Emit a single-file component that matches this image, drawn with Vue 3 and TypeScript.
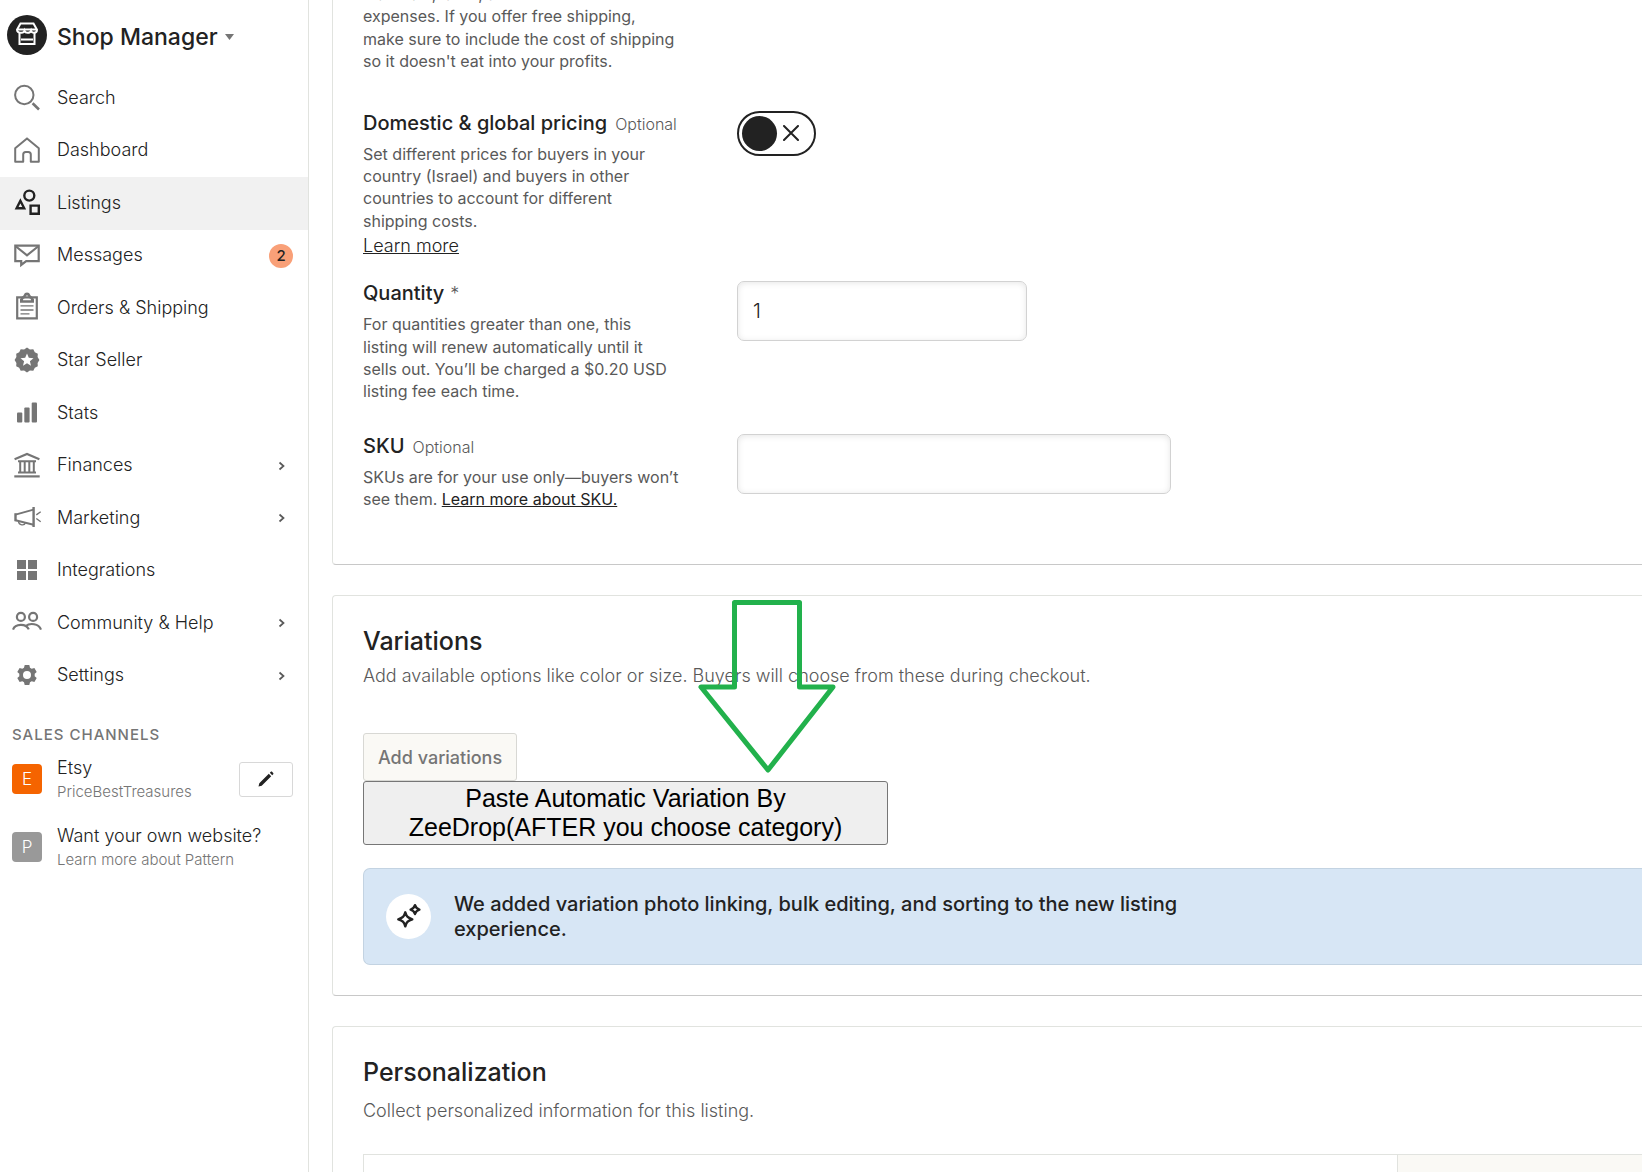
<script setup lang="ts">
import { ref } from 'vue'

interface NavItem {
  label: string
  icon: string
  active?: boolean
  badge?: number
  expandable?: boolean
}

const stroke = 'fill="none" stroke="currentColor"'

const navItems: NavItem[] = [
  {
    label: 'Search',
    icon: `<g ${stroke} stroke-width="2"><circle cx="12.3" cy="13" r="9.2"/><path stroke-width="2.6" d="M20.6 21.3 27 27.5"/></g>`,
  },
  {
    label: 'Dashboard',
    icon: `<path ${stroke} stroke-width="2" stroke-linejoin="round" d="M3.2 13.2 15 3.4l11.8 9.8v13.6h-8v-7.4a2.5 2.5 0 0 0-2.5-2.5h-2.6a2.5 2.5 0 0 0-2.5 2.5v7.4H3.2Z"/>`,
  },
  {
    label: 'Listings',
    active: true,
    icon: `<g ${stroke} stroke-width="2.4"><circle cx="17.3" cy="8.6" r="5"/><path d="M8.4 13.8 4.6 21.3h7.6Z"/><path d="M18.6 18.6h8.2v8.2h-8.2Z"/></g>`,
  },
  {
    label: 'Messages',
    badge: 2,
    icon: `<g ${stroke} stroke-width="2.2"><path d="M3.3 5.6h23.4v15.6H14.2L9.2 25v-3.8H3.3Z"/><path d="m4 6.5 11 8.8 11-8.8"/></g>`,
  },
  {
    label: 'Orders & Shipping',
    icon: `<path ${stroke} stroke-width="2.2" d="M5.2 5.4h19.6v21H5.2Z"/><path fill="currentColor" fill-rule="evenodd" d="M8 10.8V7.2L10 4.6c.8-.4 1.4-.9 1.7-1.7a3.5 3.5 0 0 1 6.6 0c.3.8.9 1.3 1.7 1.7l2 2.6v3.6Zm3-2.6h8c0-1-.6-1.6-1.6-1.9-.9-.3-1-.8-1.1-1.5a1.3 1.3 0 0 0-2.6 0c-.1.7-.2 1.2-1.1 1.5-1 .3-1.6.9-1.6 1.9Z"/><path ${stroke} stroke-width="1.3" d="M8.5 13.9h13M8.5 18h13M8.5 21.9h9"/>`,
  },
  {
    label: 'Star Seller',
    icon: `<path fill="currentColor" fill-rule="evenodd" d="m15 2.6 2.9 1.8 3.4-.2 1.5 3 3 1.5-.2 3.4L27.4 15l-1.8 2.9.2 3.4-3 1.5-1.5 3-3.4-.2L15 27.4l-2.9-1.8-3.4.2-1.5-3-3-1.5.2-3.4L2.6 15l1.8-2.9-.2-3.4 3-1.5 1.5-3 3.4.2Zm0 5.9-1.8 4.3-4.7.4 3.6 3-1.1 4.6 4-2.5 4 2.5-1.1-4.6 3.6-3-4.7-.4Z"/>`,
  },
  {
    label: 'Stats',
    icon: `<g fill="currentColor"><rect x="5" y="15.5" width="5.3" height="10" rx="1"/><rect x="12.3" y="10.5" width="5.3" height="15" rx="1"/><rect x="19.7" y="5.5" width="5.3" height="20" rx="1"/></g>`,
  },
  {
    label: 'Finances',
    expandable: true,
    icon: `<g ${stroke} stroke-width="2"><path stroke-width="2.2" d="M2.6 9.2 15 4l12.4 5.2"/><path d="M6 11.2h18M6 22.6h18M8.2 11v12M12.7 11v12M17.3 11v12M21.8 11v12"/><path stroke-width="2.2" d="M2.3 26.4h25.4"/></g>`,
  },
  {
    label: 'Marketing',
    expandable: true,
    icon: `<g ${stroke} stroke-width="2"><path stroke-width="2.4" d="M3.5 11.3v8M21.6 5v20"/><path d="m3.5 12.6 18-5M3.5 18.3l18 4.5"/><path stroke-width="1.4" d="M6.5 19.5c.4 4 6 4.4 6.8 1.4M24.3 12.9l4.4-3.2M24.3 16.5l4.4 3.2"/></g>`,
  },
  {
    label: 'Integrations',
    icon: `<path fill="currentColor" d="M5 5h9v9H5ZM16 5h9v9h-9ZM5 16h9v9H5ZM16 16h9v9h-9Z"/>`,
  },
  {
    label: 'Community & Help',
    expandable: true,
    icon: `<g ${stroke} stroke-width="2.2"><circle cx="8.9" cy="9.9" r="4"/><circle cx="21.1" cy="9.9" r="4"/><path d="M1 22.6c2.2-6 13-6.4 15.8-.2M13.8 19c4-3.3 13-2.6 15.2 3.6"/></g>`,
  },
  {
    label: 'Settings',
    expandable: true,
    icon: `<path fill="currentColor" fill-rule="evenodd" d="M12.7 5h4.6l.7 2.7 1.7 1 2.7-.8 2.3 4-2 1.9v2.4l2 1.9-2.3 4-2.7-.8-1.7 1-.7 2.7h-4.6l-.7-2.7-1.7-1-2.7.8-2.3-4 2-1.9v-2.4l-2-1.9 2.3-4 2.7.8 1.7-1Zm2.3 6a4 4 0 1 0 0 8 4 4 0 0 0 0-8Z"/>`,
  },
]

const globalPricing = ref(false)
const quantity = ref('1')
const sku = ref('')
</script>

<template>
  <div class="page">
    <aside class="sidebar">
      <button class="brand" type="button">
        <svg class="brand-logo" viewBox="0 0 40 40" aria-hidden="true">
          <circle cx="20" cy="20" r="20" fill="#222" />
          <g fill="none" stroke="#fff" stroke-width="2">
            <path d="M13.5 8.5h13l3.5 6.3c0 2.5-1.8 3-3 3-1.5 0-2.7-.8-3-2-.6 1.6-1.8 2-3.5 2-1.7 0-2.4-.4-3-2-.3 1.2-1.5 2-3 2-2.5 0-4.5-.5-4.5-3Z" />
            <path d="M10.5 14.5h19M12.5 18V29h15V18M14 24.5h12" />
          </g>
        </svg>
        <span class="brand-name">Shop Manager</span>
        <svg class="caret" viewBox="0 0 9 6" aria-hidden="true"><path fill="#757575" d="M0 0h9L4.5 6Z" /></svg>
      </button>

      <nav class="nav">
        <a v-for="item in navItems" :key="item.label" href="#" class="nav-item" :class="{ active: item.active }">
          <svg class="nav-icon" viewBox="0 0 30 30" aria-hidden="true" v-html="item.icon"></svg>
          <span class="nav-label">{{ item.label }}</span>
          <span v-if="item.badge" class="badge">{{ item.badge }}</span>
          <svg v-if="item.expandable" class="chevron" viewBox="0 0 8 10" aria-hidden="true">
            <path d="m1.5 1.5 4 3.5-4 3.5" fill="none" stroke="#595959" stroke-width="1.7" />
          </svg>
        </a>
      </nav>

      <h2 class="channels-title">Sales channels</h2>
      <div class="channel">
        <span class="tile tile-etsy">E</span>
        <a href="#" class="channel-text">
          <span class="channel-name">Etsy</span>
          <span class="channel-sub">PriceBestTreasures</span>
        </a>
        <button class="edit" type="button" aria-label="Edit shop">
          <svg width="18" height="18" viewBox="0 0 18 18" aria-hidden="true">
            <path fill="#222" d="m1.5 16.5.8-3.2L11.8 3.8l2.4 2.4-9.5 9.5ZM12.8 2.8l1-1c.4-.4.9-.4 1.3 0l1.1 1.1c.4.4.4.9 0 1.3l-1 1Z" />
          </svg>
        </button>
      </div>
      <div class="channel">
        <span class="tile tile-pattern">P</span>
        <a href="#" class="channel-text">
          <span class="channel-name">Want your own website?</span>
          <span class="channel-sub">Learn more about Pattern</span>
        </a>
      </div>
    </aside>

    <main class="main">
      <section class="card card-pricing">
        <div class="field field-price">
          <p class="help">
            materials, labor, and other business<br />
            expenses. If you offer free shipping,<br />
            make sure to include the cost of shipping<br />
            so it doesn't eat into your profits.
          </p>
        </div>

        <div class="field field-global">
          <div class="field-info">
            <label class="field-label" for="global">Domestic &amp; global pricing</label>
            <span class="optional">Optional</span>
            <p class="help">
              Set different prices for buyers in your<br />
              country (Israel) and buyers in other<br />
              countries to account for different<br />
              shipping costs.
            </p>
            <a href="#" class="learn">Learn more</a>
          </div>
          <span class="toggle">
            <input id="global" v-model="globalPricing" type="checkbox" />
            <svg viewBox="0 0 16 16" aria-hidden="true">
              <path d="m1 1 14 14M15 1 1 15" fill="none" stroke="#222" stroke-width="2" stroke-linecap="round" />
            </svg>
          </span>
        </div>

        <div class="field field-quantity">
          <div class="field-info">
            <label class="field-label" for="quantity">Quantity</label>
            <span class="required">*</span>
            <p class="help">
              For quantities greater than one, this<br />
              listing will renew automatically until it<br />
              sells out. You’ll be charged a $0.20 USD<br />
              listing fee each time.
            </p>
          </div>
          <input id="quantity" v-model="quantity" class="text-input narrow" type="text" />
        </div>

        <div class="field">
          <div class="field-info">
            <label class="field-label" for="sku">SKU</label>
            <span class="optional">Optional</span>
            <p class="help">
              SKUs are for your use only—buyers won’t<br />
              see them. <a href="#">Learn more about SKU.</a>
            </p>
          </div>
          <input id="sku" v-model="sku" class="text-input" type="text" />
        </div>
      </section>

      <section class="card card-variations">
        <h2 class="card-title">Variations</h2>
        <p class="card-sub">Add available options like color or size. Buyers will choose from these during checkout.</p>
        <button class="add" type="button">Add variations</button>
        <button class="paste" type="button">Paste Automatic Variation By ZeeDrop(AFTER you choose category)</button>
        <div class="banner">
          <span class="banner-icon">
            <svg width="27" height="27" viewBox="0 0 27 27" aria-hidden="true">
              <g fill="none" stroke="#222" stroke-width="2.4" stroke-linejoin="round">
                <path d="M10.3 9.3c1.3 4.3 2.7 5.7 7 7-4.3 1.3-5.7 2.7-7 7-1.3-4.3-2.7-5.7-7-7 4.3-1.3 5.7-2.7 7-7Z" />
                <path d="M20 2.2c.8 2.7 1.7 3.6 4.4 4.4-2.7.8-3.6 1.7-4.4 4.4-.8-2.7-1.7-3.6-4.4-4.4 2.7-.8 3.6-1.7 4.4-4.4Z" />
              </g>
            </svg>
          </span>
          <p class="banner-text">
            We added variation photo linking, bulk editing, and sorting to the new listing experience.
          </p>
        </div>
        <svg class="arrow" width="140" height="180" viewBox="0 0 140 180" aria-hidden="true">
          <path
            d="M37.5 6.5h65V91H136L71 174 4 91h33.5Z"
            fill="none"
            stroke="#22b14c"
            stroke-width="5"
            stroke-linejoin="round"
          />
        </svg>
      </section>

      <section class="card card-personalization">
        <h2 class="card-title">Personalization</h2>
        <p class="card-sub">Collect personalized information for this listing.</p>
        <div class="panel">
          <div class="panel-form"></div>
          <div class="panel-preview"></div>
        </div>
      </section>
    </main>
  </div>
</template>

<style>
body {
  margin: 0;
  background: #fff;
}
</style>

<style scoped>
.page {
  display: flex;
  height: 100vh;
  overflow: hidden;
  color: #222;
  font-family: Inter, 'Liberation Sans', sans-serif;
  font-size: 18px;
  font-weight: 300;
}
.page * {
  box-sizing: border-box;
}
h2,
p {
  margin: 0;
}
a {
  color: inherit;
}
button,
input {
  font: inherit;
  color: inherit;
}

/* Sidebar */
.sidebar {
  flex: none;
  width: 309px;
  border-right: 1px solid #e1e3df;
}
.brand {
  display: flex;
  align-items: center;
  width: 100%;
  height: 72px;
  padding: 0 0 2px 7px;
  border: 0;
  background: none;
}
.brand-logo {
  width: 40px;
  height: 40px;
  margin-right: 10px;
}
.brand-name {
  padding-top: 4px;
  font-size: 23px;
  font-weight: 500;
}
.caret {
  width: 9px;
  height: 6px;
  margin: 4px 0 0 7px;
}
.nav {
  display: grid;
  grid-auto-rows: 1fr;
  height: 630px;
}
.nav-item {
  display: flex;
  align-items: center;
  padding: 0 15px 2px 12px;
  text-decoration: none;
}
.nav-item.active {
  background: #f1f1f1;
}
.nav-icon {
  flex: none;
  width: 30px;
  height: 30px;
  margin-right: 15px;
  color: #757575;
}
.active .nav-icon {
  color: #222;
}
.nav-label {
  flex: 1;
}
.badge {
  width: 24px;
  margin-top: 2px;
  border-radius: 12px;
  background: #f9a078;
  font-size: 15px;
  font-weight: 500;
  line-height: 24px;
  text-align: center;
}
.chevron {
  width: 8px;
  height: 10px;
  margin: 2px 7px 0 0;
}
.channels-title {
  padding: 24px 12px 12px;
  color: #757575;
  font-size: 15px;
  font-weight: 500;
  line-height: 18px;
  letter-spacing: 1px;
  text-transform: uppercase;
}
.channel {
  display: flex;
  align-items: center;
  height: 48px;
  margin-bottom: 20px;
  padding: 0 15px 0 12px;
}
.tile {
  width: 30px;
  margin: 0 15px 2px 0;
  border-radius: 4px;
  color: #fff;
  font-size: 17px;
  line-height: 30px;
  text-align: center;
}
.tile-etsy {
  background: #f56400;
}
.tile-pattern {
  background: #999;
}
.channel-text {
  display: flex;
  flex: 1;
  flex-direction: column;
  line-height: 24px;
  text-decoration: none;
  white-space: nowrap;
}
.channel-sub {
  color: #757575;
  font-size: 15px;
}
.edit {
  display: flex;
  align-items: center;
  justify-content: center;
  width: 54px;
  height: 35px;
  margin-bottom: 2px;
  padding: 0;
  border: 1px solid #d8d8d8;
  border-radius: 3px;
  background: #fff;
}

/* Cards */
.main {
  flex: 1;
  min-width: 0;
  padding-left: 23px;
}
.card {
  position: relative;
  margin-bottom: 30px;
  padding: 30px;
  padding-right: 0;
  border: 1px solid #e1e3df;
  border-right: 0;
  border-bottom-color: #c8c8c8;
  border-radius: 4px 0 0 4px;
}
.card-pricing {
  margin-top: -56px;
}
.field {
  display: grid;
  grid-template-columns: 328px 1fr;
  column-gap: 46px;
  align-items: start;
  margin-bottom: 24px;
}
.field-price {
  margin-bottom: 38px;
}
.field-global {
  margin-bottom: 23px;
}
.field-quantity {
  margin-bottom: 31px;
}
.field-label {
  font-size: 20px;
  font-weight: 500;
  line-height: 24px;
}
.optional {
  margin-left: 8px;
  color: #595959;
  font-size: 16px;
}
.required {
  margin-left: 6px;
  color: #595959;
}
.help {
  margin-top: 8px;
  color: #595959;
  font-size: 16px;
  font-weight: 400;
  line-height: 1.4;
}
.help a {
  color: #222;
}
.learn {
  display: block;
  padding-top: 2px;
  line-height: 24px;
}
.toggle {
  display: flex;
  align-items: center;
  width: 79px;
  height: 45px;
  padding: 0 15px 0 3px;
  border: 2px solid #222;
  border-radius: 23px;
}
.toggle input {
  flex: none;
  width: 35px;
  height: 35px;
  margin: 0 6px 0 0;
  border-radius: 50%;
  background: #222;
  appearance: none;
}
.toggle svg {
  width: 16px;
  height: 16px;
}
.text-input {
  width: 434px;
  height: 60px;
  padding: 0 15px;
  border: 1px solid #d2d2d2;
  border-radius: 7px;
  background: #fff;
  box-shadow: inset 0 1px 6px rgba(0, 0, 0, 0.1);
  font-size: 20px;
}
.text-input.narrow {
  width: 290px;
}
.card-title {
  font-size: 25px;
  font-weight: 500;
  line-height: 30px;
}
.card-sub {
  color: #595959;
  line-height: 24px;
}
.card-variations .card-sub {
  margin: 8px 0 45px;
}
.add {
  display: block;
  height: 48px;
  padding: 0 14px;
  border: 1px solid #d8d8d4;
  border-radius: 3px;
  background: #faf9f5;
  color: #757575;
  font-weight: 500;
}
.paste {
  display: block;
  width: 525px;
  height: 64px;
  padding: 0 6px;
  border: 1px solid #767676;
  border-radius: 3px;
  background: #efefef;
  color: #000;
  font: 25px/29px 'Liberation Sans', Arial, sans-serif;
}
.banner {
  display: flex;
  align-items: center;
  gap: 23px;
  height: 97px;
  margin-top: 23px;
  padding-left: 22px;
  border: 1px solid #c3d3e2;
  border-right: 0;
  border-radius: 7px 0 0 7px;
  background: #d7e6f5;
}
.banner-icon {
  display: flex;
  flex: none;
  align-items: center;
  justify-content: center;
  width: 45px;
  height: 45px;
  border-radius: 50%;
  background: #fff;
}
.banner-text {
  max-width: 760px;
  font-size: 20px;
  font-weight: 500;
  line-height: 25px;
}
.arrow {
  position: absolute;
  top: 0;
  left: 364px;
}
.card-personalization .card-sub {
  margin: 12px 0 31px;
}
.panel {
  display: grid;
  grid-template-columns: 1034px 1fr;
  height: 300px;
  border-top: 1px solid #e1e3df;
  border-left: 1px solid #e1e3df;
}
.panel-form {
  border-right: 1px solid #e1e3df;
}
.panel-preview {
  background: #faf9f5;
}
</style>
